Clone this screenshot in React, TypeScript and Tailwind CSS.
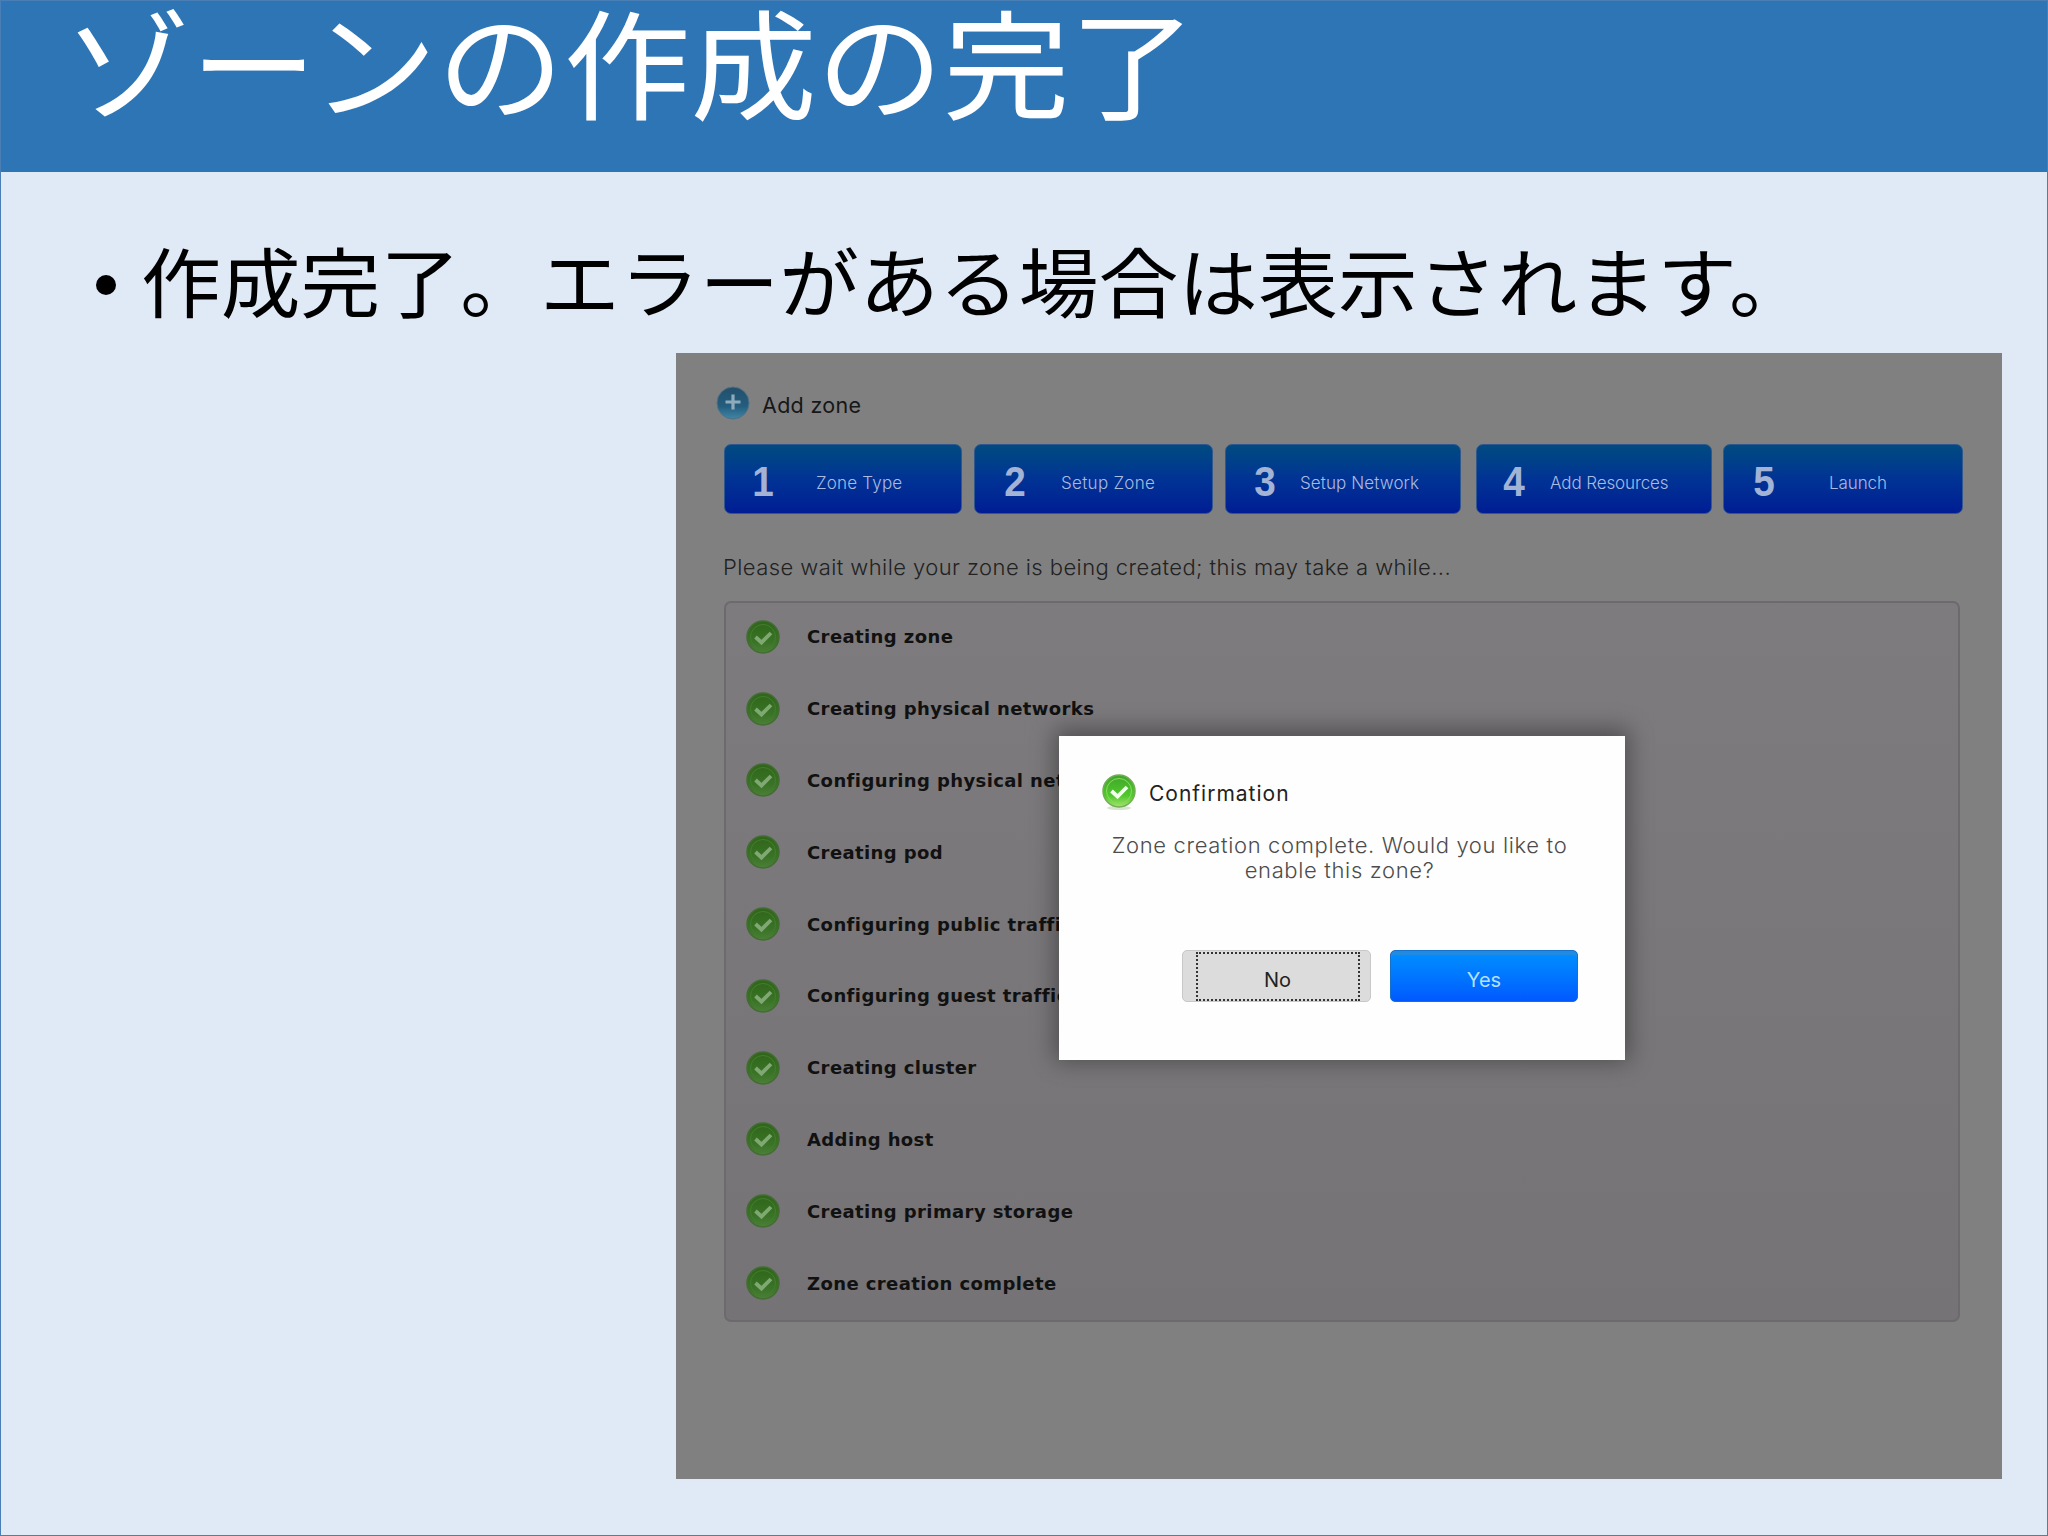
import { useId } from 'react';

const STEPS = [
  { number: 1, label: 'Zone Type', box: 'w-[238px] pl-[26px]', text: 'pl-[41px] tracking-[0.2px]' },
  { number: 2, label: 'Setup Zone', box: 'w-[239px] ml-3 pl-[28px]', text: 'pl-[34px] tracking-[0.3px]' },
  { number: 3, label: 'Setup Network', box: 'w-[236px] ml-3 pl-[27px]', text: 'pl-[23px] tracking-[0.1px]' },
  { number: 4, label: 'Add Resources', box: 'w-[236px] ml-[15px] pl-[25px]', text: 'pl-[24px] tracking-[-0.1px]' },
  { number: 5, label: 'Launch', box: 'w-[240px] ml-[11px] pl-[28px]', text: 'pl-[53px] tracking-[-0.1px]' },
];

const TASKS = [
  'Creating zone',
  'Creating physical networks',
  'Configuring physical networks',
  'Creating pod',
  'Configuring public traffic',
  'Configuring guest traffic',
  'Creating cluster',
  'Adding host',
  'Creating primary storage',
  'Zone creation complete',
];

function CheckIcon({ bright = false }: { bright?: boolean }) {
  const id = useId();
  return (
    <svg viewBox="0 0 36 38" className="h-[38px] w-9 shrink-0">
      <defs>
        <linearGradient id={id} x1="0" y1="0" x2="0" y2="1">
          <stop offset="0" stopColor={bright ? '#3fa52a' : '#2f6519'} />
          <stop offset="0.65" stopColor={bright ? '#50c92c' : '#397326'} />
          <stop offset="1" stopColor={bright ? '#a4e36a' : '#4d7f39'} />
        </linearGradient>
      </defs>
      {bright && <ellipse cx="18" cy="35" rx="12" ry="2" fill="#d5e6cf" />}
      <circle cx="18" cy="18" r="16" fill={`url(#${id})`} stroke={bright ? '#72ad55' : '#426d32'} strokeWidth="1.5" />
      <circle cx="18" cy="18" r="12.5" fill="none" stroke={bright ? '#8bd965' : '#447d30'} strokeWidth="1" />
      <path d="M10.5 18l6 5.5 9.5-9.5" fill="none" stroke={bright ? '#f4fff0' : '#7fa873'} strokeWidth="3.8" />
    </svg>
  );
}

function PlusIcon() {
  return (
    <svg viewBox="0 0 34 36" className="h-9 w-[34px] shrink-0">
      <defs>
        <linearGradient id="plus" x1="0" y1="0" x2="0" y2="1">
          <stop offset="0" stopColor="#234f6b" />
          <stop offset="0.6" stopColor="#245d7e" />
          <stop offset="1" stopColor="#4186a5" />
        </linearGradient>
      </defs>
      <circle cx="17" cy="18" r="16" fill="url(#plus)" stroke="#4c7189" strokeWidth="1" />
      <path d="M17 9.5v15M9.500 17h15" stroke="#8fabbb" strokeWidth="3.2" />
    </svg>
  );
}

function Dialog() {
  return (
    <div className="absolute left-[383px] top-[383px] h-[324px] w-[566px] bg-[#fefefe] shadow-[0_-3px_22px_4px_rgba(0,0,0,0.36)]">
      <div className="flex items-center pl-[42px] pt-[37px]">
        <CheckIcon bright />
        <h2 className="ml-[12px] pt-[3px] text-[21px] leading-[35px] font-normal tracking-[1px] text-[#222]">
          Confirmation
        </h2>
      </div>
      <p className="mt-[22px] pr-[5px] text-center text-[22px] leading-[25px] tracking-[0.65px] text-[#4c4c4c]">
        Zone creation complete. Would you like to
        <br />
        enable this zone?
      </p>
      <div className="mt-[67px] flex pl-[123px]">
        <button className="flex h-[52px] w-[189px] justify-center rounded-[5px] border border-[#c8c8c8] bg-[#dddcdd] pt-px pl-[2px]">
          <span className="h-[49px] w-[164px] border-2 border-dotted border-[#333] text-[20px] leading-[52px] font-normal text-[#222]">
            No
          </span>
        </button>
        <button className="ml-[19px] h-[52px] w-[188px] rounded-[5px] border border-[#1671cc] bg-gradient-to-b from-[#0590ff] to-[#0059ff] pt-[7px] text-[20px] font-normal text-[#b5e0ff] shadow-[inset_0_4px_0_0_#208be0]">
          Yes
        </button>
      </div>
    </div>
  );
}

export default function App() {
  return (
    <main className="h-[1536px] w-[2048px] overflow-hidden border border-[#4a7fb5] bg-[#e0eaf6] font-['Noto_Sans_CJK_JP',sans-serif]">
      <header className="h-[171px] bg-[#2e75b6] pl-[63px]">
        <h1 className="scale-y-[0.94] text-[126.5px] leading-[115px] whitespace-nowrap text-white">ゾーンの作成の完了</h1>
      </header>

      <div className="flex h-[181px] items-center pl-[95px] pt-8">
        <span className="mt-3 size-5 rounded-full bg-black" />
        <p className="ml-[25px] scale-y-[0.95] text-[79.8px] leading-[100px] whitespace-nowrap text-black">
          作成完了。エラーがある場合は表示されます。
        </p>
      </div>

      <section className="relative ml-[675px] h-[1126px] w-[1326px] bg-[#808080] pl-12 font-['Inter',sans-serif] font-light">
        <div className="flex h-[91px] items-center pt-[9px] -ml-2">
          <PlusIcon />
          <h2 className="ml-3 pt-1 text-[21.5px] font-normal tracking-[0.3px] text-[#171717]">Add zone</h2>
        </div>

        {/* Wizard steps */}
        <div className="flex">
          {STEPS.map((step) => (
            <div
              key={step.number}
              className={`flex h-[70px] shrink-0 items-center rounded-[7px] border border-[#31578f] bg-gradient-to-b from-[#004a80] via-[#003395] to-[#001c94] ${step.box}`}
            >
              <span className="mt-1 w-6 scale-x-90 text-center font-['Liberation_Sans',sans-serif] text-[43px] leading-none font-bold text-[#a2b3d6]">
                {step.number}
              </span>
              <span className={`mt-[9px] text-[17px] whitespace-nowrap text-[#aabbe0] ${step.text}`}>{step.label}</span>
            </div>
          ))}
        </div>

        <p className="mt-[37px] -ml-px h-[50px] text-[22px] leading-[32px] tracking-[0.43px] text-[#222]">
          Please wait while your zone is being created; this may take a while...
        </p>

        {/* Progress list */}
        <ul className="h-[721px] w-[1236px] rounded-[7px] border-2 border-[#6c6a6c] bg-gradient-to-b from-[#7d7b7d] to-[#757375] font-['DejaVu_Sans',sans-serif] font-bold">
          {TASKS.map((task) => (
            <li key={task} className="flex h-[71.8px] items-center pb-[2px] pl-[19px]">
              <CheckIcon />
              <span className="ml-[26px] pb-[2px] text-[18px] tracking-[0.4px] whitespace-nowrap text-[#111]">{task}</span>
            </li>
          ))}
        </ul>

        <Dialog />
      </section>
    </main>
  );
}
